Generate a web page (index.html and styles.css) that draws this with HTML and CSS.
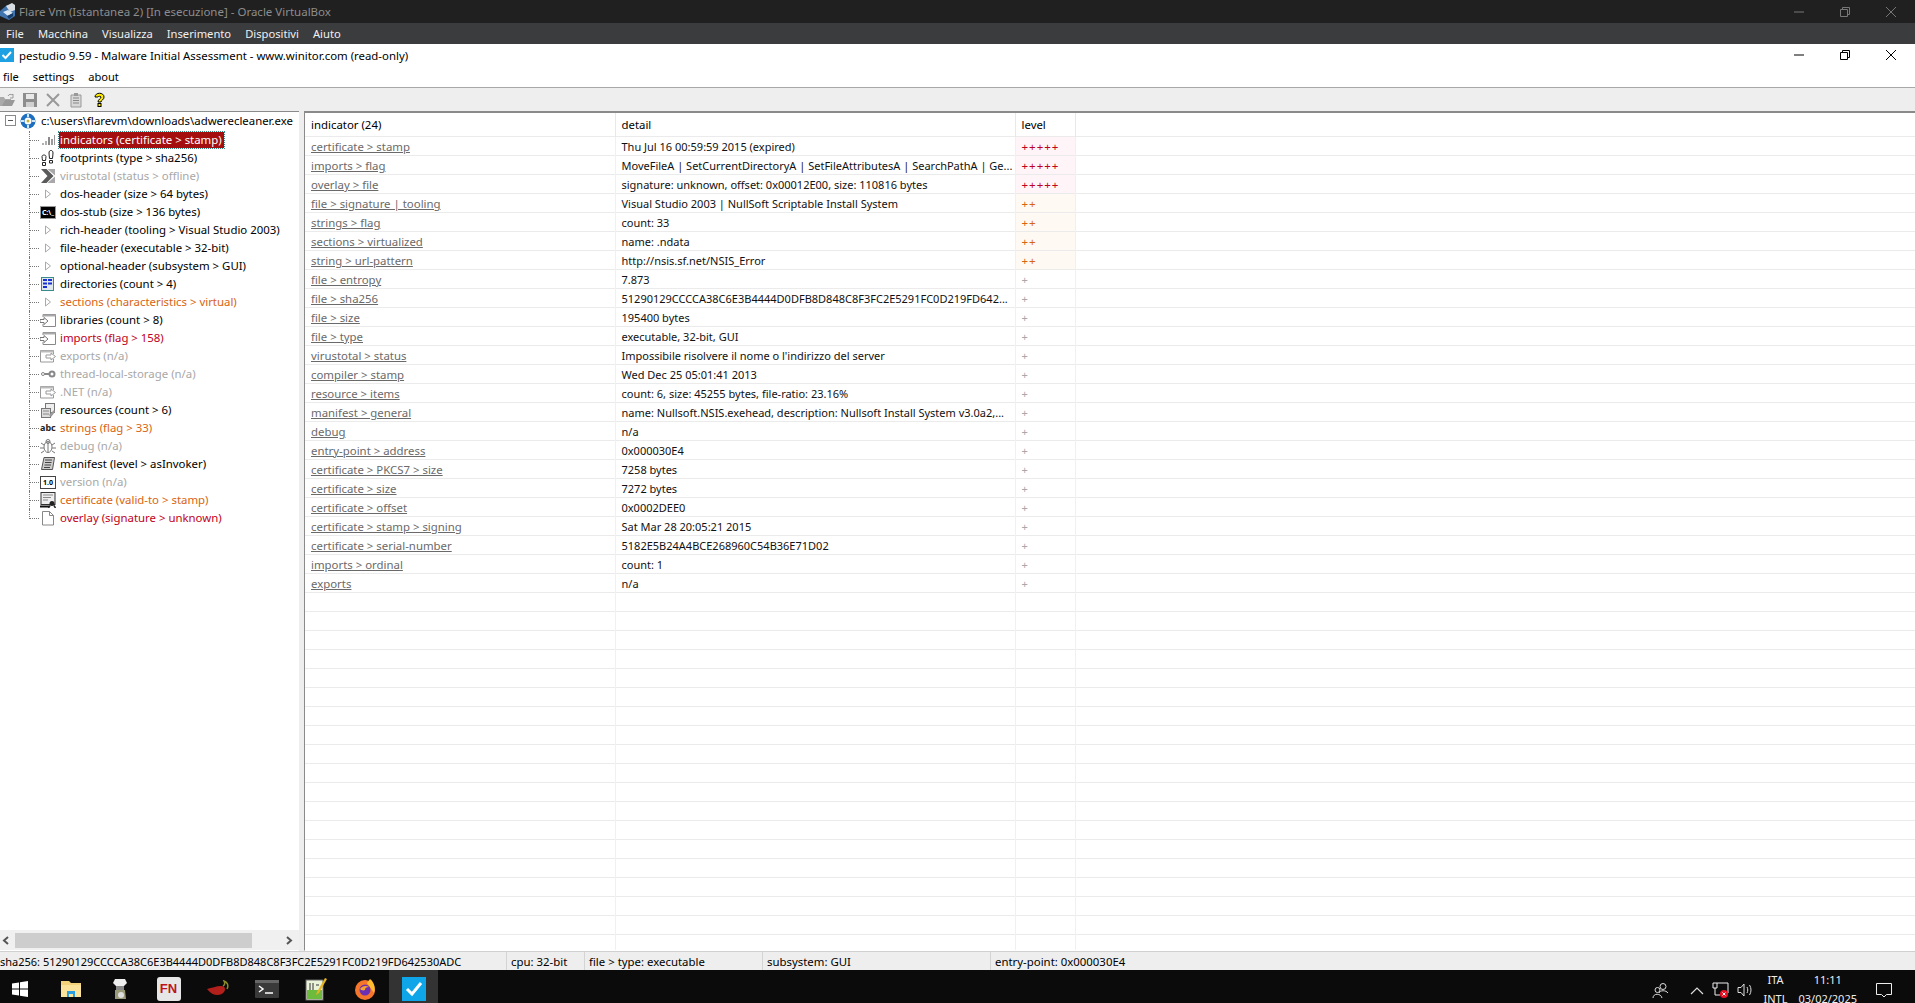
FILE: index.html
```html
<!DOCTYPE html>
<html>
<head>
    <meta charset="utf-8" />
    <title>pestudio 9.59 - Malware Initial Assessment</title>
    <link rel="stylesheet" href="styles.css">
</head>
<body>
    <svg class="defs" width="0" height="0">
        <symbol id="i_bars" viewBox="0 0 16 16"><path d="M2 13h2v-2H2zM5 13h2V9H5z" fill="#b0b0b0"/><path d="M8 13h2V5H8z" fill="#8a8a8a"/><path d="M11 13h2V7h-2zM14 13h1V3h-1z" fill="#9a9a9a"/></symbol>
        <symbol id="i_foot" viewBox="0 0 16 16"><g fill="none" stroke="#222"><path d="M2 6.500c0-2 4-2 4 0 0 1.500-.5 3-.5 4h-3c0-1-.5-2.500-.5-4zM2.500 12.500h3v3h-3z"/><path d="M9 3c0-3.500 4-3.500 4 0 0 2-.5 4-.5 5.500h-3C9.500 7 9 5 9 3zM9.500 10.500h3v2.500h-3z"/></g></symbol>
        <symbol id="i_vt" viewBox="0 0 16 16"><path d="M1 1h5.500l7 7-7 7H1l6.500-7z" fill="#5a5a5a"/><path d="M7.500 1H15v6.500zM7.500 15H15V8.500z" fill="#a8a8a8"/></symbol>
        <symbol id="i_tri" viewBox="0 0 16 16"><path d="M5.500 4v8l5-4z" fill="#fff" stroke="#aaa"/></symbol>
        <symbol id="i_dir" viewBox="0 0 16 16"><rect x="1.500" y="1.500" width="12" height="13" fill="#dfe8ee" stroke="#3b8a8a"/><path d="M3 3h4v2H3zM8 3h4v2H8zM3 6.500h4v2H3zM8 6.500h4v2H8zM3 10h4v2H3z" fill="#1a2fd0"/></symbol>
        <symbol id="i_lib" viewBox="0 0 16 16"><path d="M3 5V2.500h12.500v12H3V12" fill="#fff" stroke="#888"/><path d="M3 3.500h12.500" stroke="#aaa" stroke-width="2"/><path d="M0 7.500h4V5.500l4 3.500-4 3.500V10.500H0z" fill="#fff" stroke="#777"/></symbol>
        <symbol id="i_exp" viewBox="0 0 16 16"><path d="M.5 14V2.500h13V6M.5 14h13v-3" fill="#fff" stroke="#999"/><path d="M.5 3.500h13" stroke="#bbb" stroke-width="2"/><path d="M6 7h5V5l4.500 3.500L11 12v-2H6z" fill="#fff" stroke="#999"/></symbol>
        <symbol id="i_key" viewBox="0 0 16 16"><circle cx="12" cy="8" r="2.500" fill="none" stroke="#888" stroke-width="2"/><path d="M4 8h5" stroke="#888" stroke-width="2"/><circle cx="3" cy="8" r="1.500" fill="#fff" stroke="#888"/></symbol>
        <symbol id="i_res" viewBox="0 0 16 16"><rect x="5.500" y="1.500" width="9" height="9" fill="#eee" stroke="#777"/><rect x="1.500" y="6.500" width="9" height="9" fill="#ddd" stroke="#777"/><path d="M3 9h6M3 12h6" stroke="#888"/><path d="M9 13l5-5 1 2-4 5z" fill="#999"/></symbol>
        <symbol id="i_bug" viewBox="0 0 16 16"><g fill="none" stroke="#777"><ellipse cx="8" cy="9" rx="4" ry="5.500"/><circle cx="8" cy="3.500" r="2"/><path d="M8 4v10M1 5l3 2M15 5l-3 2M0 10h4M16 10h-4M1 15l3-2M15 15l-3-2"/></g></symbol>
        <symbol id="i_man" viewBox="0 0 16 16"><path d="M4 1.500h10.500l-2 12H1.500z" fill="#ccc" stroke="#555"/><path d="M5 4h7M5 6.500h6.500M4.500 9h6.500M4 11.500h6" stroke="#444"/></symbol>
        <symbol id="i_cert" viewBox="0 0 16 16"><rect x="1" y="0.500" width="14" height="12" fill="#eee" stroke="#333"/><path d="M3 3h10M3 5.500h8M3 8h5" stroke="#888"/><path d="M0 14.500h9" stroke="#111" stroke-width="2"/><circle cx="12" cy="11.500" r="2.500" fill="#222"/><path d="M10 13.500l-1.500 2.500M14 13.500l1.500 2.500" stroke="#222" stroke-width="1.500"/></symbol>
        <symbol id="i_page" viewBox="0 0 16 16"><path d="M2.500 1.500h7l4 4v9.500h-11z" fill="#fff" stroke="#888"/><path d="M9.500 1.500v4h4" fill="none" stroke="#888"/></symbol>
    </svg>

    <div id="vm_title">
        <svg class="vm_logo" width="15" height="18" viewBox="0 0 15 18"><path d="M0 8l7-6 8 3v8l-6 4-9-4z" fill="#3f74ae"/><path d="M6 3l6-3 3 2v5l-5 2z" fill="#d8dde2"/><path d="M3 9l5-2 5 3-5 3z" fill="#dce9f4"/><path d="M7 13l6-3v3l-4 3z" fill="#173c68"/></svg>
        <span>Flare Vm (Istantanea 2) [In esecuzione] - Oracle VirtualBox</span>
        <div class="caption caption_dim">
            <svg width="12" height="12" viewBox="0 0 12 12"><path d="M1 6h10" stroke="currentColor"/></svg>
            <svg width="12" height="12" viewBox="0 0 12 12"><path d="M1.500 3.500h7v7h-7zM3.500 3.500v-2h7v7h-2" fill="none" stroke="currentColor"/></svg>
            <svg width="12" height="12" viewBox="0 0 12 12"><path d="M1 1l10 10M11 1L1 11" stroke="currentColor"/></svg>
        </div>
    </div>
    <div id="vm_menu">
        <span>File</span><span>Macchina</span><span>Visualizza</span><span>Inserimento</span><span>Dispositivi</span><span>Aiuto</span>
    </div>

    <div id="app_title">
        <svg class="app_logo" width="14" height="14" viewBox="0 0 14 14"><rect width="14" height="14" fill="#1da1e2"/><path d="M2.500 7l3 3 5.500-6" fill="none" stroke="#fff" stroke-width="2"/></svg>
        <span>pestudio 9.59 - Malware Initial Assessment - www.winitor.com (read-only)</span>
        <div class="caption">
            <svg width="12" height="12" viewBox="0 0 12 12"><path d="M1 6h10" stroke="currentColor"/></svg>
            <svg width="12" height="12" viewBox="0 0 12 12"><path d="M1.500 3.500h7v7h-7zM3.500 3.500v-2h7v7h-2" fill="none" stroke="currentColor"/></svg>
            <svg width="12" height="12" viewBox="0 0 12 12"><path d="M1 1l10 10M11 1L1 11" stroke="currentColor"/></svg>
        </div>
    </div>
    <div id="app_menu">
        <span>file</span><span>settings</span><span>about</span>
    </div>
    <div id="toolbar">
        <svg width="16" height="16" viewBox="0 0 16 16"><path d="M0 5h5l1 2h6v7H0z" fill="#aaa"/><path d="M3 14l3-6h10l-3 6z" fill="#999"/><path d="M9 4c1-2 3-2 4-1l1-1v4h-3" fill="none" stroke="#999"/></svg>
        <svg width="16" height="16" viewBox="0 0 16 16"><path d="M1 1h14v14H1z" fill="#8d8d8d"/><path d="M4 2h8v5H4z" fill="#e8e8e8"/><path d="M4 10h8v5H4z" fill="#d0d0d0"/></svg>
        <svg width="16" height="16" viewBox="0 0 16 16"><path d="M2 2l12 12M14 2L2 14" stroke="#999" stroke-width="2"/></svg>
        <svg width="16" height="16" viewBox="0 0 16 16"><path d="M3 3h10v12H3z" fill="#d8d8d8" stroke="#999"/><path d="M5 6h6M5 8.500h6M5 11h6" stroke="#888"/><path d="M6 1h4v3H6z" fill="#999"/></svg>
        <svg width="16" height="16" viewBox="0 0 16 16"><path d="M4 5c0-5 9-5 9 0 0 3-3 3-3 5H7c0-3 3-3 3-5 0-1-3-1-3 0z" fill="#ffec00" stroke="#000"/><rect x="7" y="11.500" width="3" height="3" fill="#ffec00" stroke="#000"/></svg>
    </div>

    <div id="main">
        <div id="tree_pane">
            <div id="tree">
                <div class="tree_root">
                    <span class="minus"></span>
                    <svg class="globe" width="16" height="16" viewBox="0 0 16 16"><circle cx="8" cy="8" r="7.500" fill="#1f6fc0"/><circle cx="8" cy="8" r="3.500" fill="#fff"/><path d="M8 1v3M8 12v3M1 8h3M12 8h3" stroke="#cfe6f7" stroke-width="2"/><circle cx="8" cy="8" r="1.500" fill="#c5b23c"/></svg>
                    <span>c:\users\flarevm\downloads\adwerecleaner.exe</span>
                </div>
                <div class="tree_row"><span class="stub"></span><svg class="ico"><use href="#i_bars"/></svg><span class="label label_sel">indicators (certificate &gt; stamp)</span></div>
                <div class="tree_row"><span class="stub"></span><svg class="ico"><use href="#i_foot"/></svg><span class="label">footprints (type &gt; sha256)</span></div>
                <div class="tree_row"><span class="stub"></span><svg class="ico"><use href="#i_vt"/></svg><span class="label off">virustotal (status &gt; offline)</span></div>
                <div class="tree_row"><span class="stub"></span><svg class="ico"><use href="#i_tri"/></svg><span class="label">dos-header (size &gt; 64 bytes)</span></div>
                <div class="tree_row"><span class="stub"></span><span class="ico ico_dos">C:\_</span><span class="label">dos-stub (size &gt; 136 bytes)</span></div>
                <div class="tree_row"><span class="stub"></span><svg class="ico"><use href="#i_tri"/></svg><span class="label">rich-header (tooling &gt; Visual Studio 2003)</span></div>
                <div class="tree_row"><span class="stub"></span><svg class="ico"><use href="#i_tri"/></svg><span class="label">file-header (executable &gt; 32-bit)</span></div>
                <div class="tree_row"><span class="stub"></span><svg class="ico"><use href="#i_tri"/></svg><span class="label">optional-header (subsystem &gt; GUI)</span></div>
                <div class="tree_row"><span class="stub"></span><svg class="ico"><use href="#i_dir"/></svg><span class="label">directories (count &gt; 4)</span></div>
                <div class="tree_row"><span class="stub"></span><svg class="ico"><use href="#i_tri"/></svg><span class="label warn">sections (characteristics &gt; virtual)</span></div>
                <div class="tree_row"><span class="stub"></span><svg class="ico"><use href="#i_lib"/></svg><span class="label">libraries (count &gt; 8)</span></div>
                <div class="tree_row"><span class="stub"></span><svg class="ico"><use href="#i_lib"/></svg><span class="label bad">imports (flag &gt; 158)</span></div>
                <div class="tree_row"><span class="stub"></span><svg class="ico"><use href="#i_exp"/></svg><span class="label off">exports (n/a)</span></div>
                <div class="tree_row"><span class="stub"></span><svg class="ico"><use href="#i_key"/></svg><span class="label off">thread-local-storage (n/a)</span></div>
                <div class="tree_row"><span class="stub"></span><svg class="ico"><use href="#i_exp"/></svg><span class="label off">.NET (n/a)</span></div>
                <div class="tree_row"><span class="stub"></span><svg class="ico"><use href="#i_res"/></svg><span class="label">resources (count &gt; 6)</span></div>
                <div class="tree_row"><span class="stub"></span><span class="ico ico_abc">abc</span><span class="label warn">strings (flag &gt; 33)</span></div>
                <div class="tree_row"><span class="stub"></span><svg class="ico"><use href="#i_bug"/></svg><span class="label off">debug (n/a)</span></div>
                <div class="tree_row"><span class="stub"></span><svg class="ico"><use href="#i_man"/></svg><span class="label">manifest (level &gt; asInvoker)</span></div>
                <div class="tree_row"><span class="stub"></span><span class="ico ico_ver">1.0</span><span class="label off">version (n/a)</span></div>
                <div class="tree_row"><span class="stub"></span><svg class="ico"><use href="#i_cert"/></svg><span class="label warn">certificate (valid-to &gt; stamp)</span></div>
                <div class="tree_row tree_last"><span class="stub"></span><svg class="ico"><use href="#i_page"/></svg><span class="label bad">overlay (signature &gt; unknown)</span></div>
            </div>
            <div class="hscroll">
                <svg width="15" height="17" viewBox="0 0 15 17"><path d="M8 5L4 8.500l4 3.500" fill="none" stroke="#555" stroke-width="2"/></svg>
                <div class="hscroll_track"><div class="hscroll_thumb"></div></div>
                <svg width="17" height="17" viewBox="0 0 17 17"><path d="M5 5l4 3.500L5 12" fill="none" stroke="#555" stroke-width="2"/></svg>
            </div>
        </div>

        <div id="grid_pane">
            <table id="grid">
                <colgroup><col class="c1"><col class="c2"><col class="c3"><col></colgroup>
                <thead><tr><th>indicator (24)</th><th>detail</th><th>level</th><th class="rest"></th></tr></thead>
                <tbody>
                    <tr><td class="link">certificate &gt; stamp</td><td>Thu Jul 16 00:59:59 2015 (expired)</td><td class="lv5">+++++</td><td></td></tr>
                    <tr><td class="link">imports &gt; flag</td><td>MoveFileA | SetCurrentDirectoryA | SetFileAttributesA | SearchPathA | Ge...</td><td class="lv5">+++++</td><td></td></tr>
                    <tr><td class="link">overlay &gt; file</td><td>signature: unknown, offset: 0x00012E00, size: 110816 bytes</td><td class="lv5">+++++</td><td></td></tr>
                    <tr><td class="link">file &gt; signature | tooling</td><td>Visual Studio 2003 | NullSoft Scriptable Install System</td><td class="lv2">++</td><td></td></tr>
                    <tr><td class="link">strings &gt; flag</td><td>count: 33</td><td class="lv2">++</td><td></td></tr>
                    <tr><td class="link">sections &gt; virtualized</td><td>name: .ndata</td><td class="lv2">++</td><td></td></tr>
                    <tr><td class="link">string &gt; url-pattern</td><td>http://nsis.sf.net/NSIS_Error</td><td class="lv2">++</td><td></td></tr>
                    <tr><td class="link">file &gt; entropy</td><td>7.873</td><td class="lv1">+</td><td></td></tr>
                    <tr><td class="link">file &gt; sha256</td><td>51290129CCCCA38C6E3B4444D0DFB8D848C8F3FC2E5291FC0D219FD642...</td><td class="lv1">+</td><td></td></tr>
                    <tr><td class="link">file &gt; size</td><td>195400 bytes</td><td class="lv1">+</td><td></td></tr>
                    <tr><td class="link">file &gt; type</td><td>executable, 32-bit, GUI</td><td class="lv1">+</td><td></td></tr>
                    <tr><td class="link">virustotal &gt; status</td><td>Impossibile risolvere il nome o l'indirizzo del server</td><td class="lv1">+</td><td></td></tr>
                    <tr><td class="link">compiler &gt; stamp</td><td>Wed Dec 25 05:01:41 2013</td><td class="lv1">+</td><td></td></tr>
                    <tr><td class="link">resource &gt; items</td><td>count: 6, size: 45255 bytes, file-ratio: 23.16%</td><td class="lv1">+</td><td></td></tr>
                    <tr><td class="link">manifest &gt; general</td><td>name: Nullsoft.NSIS.exehead, description: Nullsoft Install System v3.0a2,...</td><td class="lv1">+</td><td></td></tr>
                    <tr><td class="link">debug</td><td>n/a</td><td class="lv1">+</td><td></td></tr>
                    <tr><td class="link">entry-point &gt; address</td><td>0x000030E4</td><td class="lv1">+</td><td></td></tr>
                    <tr><td class="link">certificate &gt; PKCS7 &gt; size</td><td>7258 bytes</td><td class="lv1">+</td><td></td></tr>
                    <tr><td class="link">certificate &gt; size</td><td>7272 bytes</td><td class="lv1">+</td><td></td></tr>
                    <tr><td class="link">certificate &gt; offset</td><td>0x0002DEE0</td><td class="lv1">+</td><td></td></tr>
                    <tr><td class="link">certificate &gt; stamp &gt; signing</td><td>Sat Mar 28 20:05:21 2015</td><td class="lv1">+</td><td></td></tr>
                    <tr><td class="link">certificate &gt; serial-number</td><td>5182E5B24A4BCE268960C54B36E71D02</td><td class="lv1">+</td><td></td></tr>
                    <tr><td class="link">imports &gt; ordinal</td><td>count: 1</td><td class="lv1">+</td><td></td></tr>
                    <tr><td class="link">exports</td><td>n/a</td><td class="lv1">+</td><td></td></tr>
                    <tr><td></td><td></td><td></td><td></td></tr>
                    <tr><td></td><td></td><td></td><td></td></tr>
                    <tr><td></td><td></td><td></td><td></td></tr>
                    <tr><td></td><td></td><td></td><td></td></tr>
                    <tr><td></td><td></td><td></td><td></td></tr>
                    <tr><td></td><td></td><td></td><td></td></tr>
                    <tr><td></td><td></td><td></td><td></td></tr>
                    <tr><td></td><td></td><td></td><td></td></tr>
                    <tr><td></td><td></td><td></td><td></td></tr>
                    <tr><td></td><td></td><td></td><td></td></tr>
                    <tr><td></td><td></td><td></td><td></td></tr>
                    <tr><td></td><td></td><td></td><td></td></tr>
                    <tr><td></td><td></td><td></td><td></td></tr>
                    <tr><td></td><td></td><td></td><td></td></tr>
                    <tr><td></td><td></td><td></td><td></td></tr>
                    <tr><td></td><td></td><td></td><td></td></tr>
                    <tr><td></td><td></td><td></td><td></td></tr>
                    <tr><td></td><td></td><td></td><td></td></tr>
                    <tr><td></td><td></td><td></td><td></td></tr>
                </tbody>
            </table>
        </div>
    </div>

    <div id="status">
        <span class="st st_sha">sha256: 51290129CCCCA38C6E3B4444D0DFB8D848C8F3FC2E5291FC0D219FD642530ADC</span>
        <span class="st st_cpu">cpu: 32-bit</span>
        <span class="st st_type">file &gt; type: executable</span>
        <span class="st st_sub">subsystem: GUI</span>
        <span class="st">entry-point: 0x000030E4</span>
    </div>

    <div id="taskbar">
        <div class="task task_start"><svg width="16" height="16" viewBox="0 0 16 16"><path d="M0 2.500l7-1v6H0zM8 1.300l8-1.200v7.400H8zM0 8.500h7v6l-7-1zM8 8.500h8v7.400l-8-1.200z" fill="#fff"/></svg></div>
        <div class="task"><svg width="22" height="20" viewBox="0 0 22 20"><path d="M1 2h8l2 2h10v14H1z" fill="#f4d27a"/><path d="M1 6h20v12H1z" fill="#fbe39b"/><path d="M7 12h8v6h-2v-3H9v3H7z" fill="#2c9fe0"/></svg></div>
        <div class="task"><svg width="16" height="24" viewBox="0 0 16 24"><path d="M3 2h10l2 4-3 3H4L1 6z" fill="#eee"/><path d="M4 9h8v4H4z" fill="#888"/><path d="M3 13h10l1 9H3z" fill="#9a9a78"/><circle cx="9" cy="18" r="3" fill="#ddd"/></svg></div>
        <div class="task"><span class="fn">FN</span></div>
        <div class="task"><svg width="24" height="18" viewBox="0 0 24 18"><path d="M1 9c5-1 9-3 14-3 4 0 5 3 3 6-3 4-11 5-17-3z" fill="#b3201b"/><path d="M17 6c2-1 2-3 1-5 3 1 5 4 3 8" fill="none" stroke="#8a8a2a" stroke-width="1.500"/></svg></div>
        <div class="task"><svg width="24" height="18" viewBox="0 0 24 18"><rect width="24" height="18" rx="1" fill="#3a3a3a"/><rect width="24" height="3" fill="#666"/><path d="M4 6l4 3-4 3" fill="none" stroke="#fff" stroke-width="1.500"/><path d="M10 13h8" stroke="#fff" stroke-width="1.500"/></svg></div>
        <div class="task"><svg width="22" height="24" viewBox="0 0 22 24"><rect x="1" y="3" width="17" height="20" fill="#e9f3d8" stroke="#666"/><path d="M2 13h15v9H2z" fill="#6cbb3c"/><path d="M5 6v7M8 6v7M11 8h3" stroke="#333"/><path d="M12 15L20 1l2 1-8 14-3 2z" fill="#e6b422"/></svg></div>
        <div class="task"><svg width="24" height="24" viewBox="0 0 24 24"><circle cx="12" cy="13" r="10" fill="#f5762a"/><path d="M17 2c4 3 6 9 4 14L14 6z" fill="#ffbd2e"/><circle cx="12" cy="13" r="5.500" fill="#6b2fb3"/><path d="M7 12c2-3 6-4 9-2-3 0-4 1-4 3-2 1-4 0-5-1z" fill="#f5a32a"/></svg></div>
        <div class="task task_on"><svg width="24" height="24" viewBox="0 0 24 24"><rect width="24" height="24" fill="#0ea5e9"/><path d="M5 12l5 5 9-11" fill="none" stroke="#fff" stroke-width="3"/></svg></div>
        <div class="tray">
            <svg width="17" height="17" viewBox="0 0 17 17"><g fill="none" stroke="#ddd"><circle cx="11" cy="4.500" r="3"/><path d="M7 11c1-3 7-3 9 0"/><circle cx="5.500" cy="8" r="2.500"/><path d="M1 16c0-5 8-5 9 0"/></g></svg>
            <svg class="tray_up" width="14" height="9" viewBox="0 0 14 9"><path d="M1 8l6-6 6 6" fill="none" stroke="#ddd" stroke-width="1.200"/></svg>
            <svg class="tray_net" width="17" height="16" viewBox="0 0 17 16"><g fill="none" stroke="#eee"><path d="M1 1h15v10h-6M1 1v5h4V1M3 6v7h5"/></g><circle cx="12" cy="12" r="4" fill="#e81123"/><path d="M10.500 10.500l3 3M13.500 10.500l-3 3" stroke="#fff"/></svg>
            <svg class="tray_vol" width="17" height="16" viewBox="0 0 17 16"><g fill="none" stroke="#ddd"><path d="M1 5.500h3L7 2v12l-3-3.500H1z"/><path d="M10 5c1 2 1 4 0 6M12.500 3c2 3 2 7 0 10"/></g></svg>
            <div class="tray_lang"><span>ITA</span><span>INTL</span></div>
            <div class="tray_clock"><span>11:11</span><span>03/02/2025</span></div>
            <svg class="tray_note" width="16" height="16" viewBox="0 0 16 16"><path d="M.5 1.500h15v11h-5L8 15l-2.500-2.500h-5z" fill="none" stroke="#eee"/></svg>
        </div>
    </div>
</body>
</html>
```

FILE: styles.css
```css
* {
    box-sizing: border-box;
}
html, body {
    height: 100%;
    margin: 0;
    overflow: hidden;
}
body {
    display: flex;
    flex-direction: column;
    font-family: "Noto Sans", "Liberation Sans", sans-serif;
    font-size: 11.4px;
    color: #000000;
    background-color: #ffffff;
}
.defs {
    display: none;
}
.caption {
    margin-left: auto;
    display: flex;
    gap: 34px;
    padding-right: 18px;
    color: #000000;
}
.caption_dim {
    color: #777777;
}
#vm_title {
    flex: none;
    height: 23px;
    display: flex;
    align-items: center;
    gap: 4px;
    background-color: #202020;
    color: #8d8d8d;
    font-size: 11.5px;
}
#vm_menu {
    flex: none;
    height: 21px;
    display: flex;
    align-items: center;
    gap: 14px;
    padding-left: 6px;
    background-color: #3b3c3e;
    color: #f0f0f0;
    font-size: 11.2px;
}
#app_title {
    flex: none;
    height: 22px;
    display: flex;
    align-items: center;
    gap: 5px;
}
#app_menu {
    flex: none;
    height: 21px;
    display: flex;
    align-items: center;
    gap: 14px;
    padding-left: 3px;
    font-size: 11.1px;
}
#toolbar {
    flex: none;
    height: 24px;
    display: flex;
    align-items: center;
    gap: 7px;
    margin-left: -1px;
    border-top: 1px solid #a8a8a8;
    background-color: #eeeeee;
}
#main {
    flex: 1;
    min-height: 0;
    display: flex;
    background-color: #eeeeee;
}
#tree_pane {
    flex: none;
    width: 299px;
    display: flex;
    flex-direction: column;
    background-color: #ffffff;
    border-top: 1px solid #8a8a8a;
}
#tree {
    flex: 1;
}
.tree_root {
    height: 17px;
    margin-bottom: 2px;
    display: flex;
    align-items: center;
    padding-left: 5px;
    white-space: nowrap;
}
.minus {
    width: 11px;
    height: 11px;
    margin-right: 4px;
    border: 1px solid #8a8a8a;
    background: linear-gradient(#555555, #555555) center / 5px 1px no-repeat;
}
.globe {
    margin-right: 5px;
}
.tree_row {
    height: 18px;
    display: flex;
    align-items: center;
    margin-left: 29px;
    white-space: nowrap;
}
.stub {
    align-self: stretch;
    width: 11px;
    border-left: 1px dotted #777777;
    background: linear-gradient(to right, #777777 50%, transparent 50%) 0 9px / 2px 1px repeat-x;
}
.tree_last .stub {
    height: 10px;
}
.ico {
    flex: none;
    width: 16px;
    height: 16px;
}
.ico_dos {
    background-color: #000000;
    border: 1px solid #999999;
    height: 13px;
    color: #ffffff;
    font-size: 7px;
    font-weight: bold;
    line-height: 11px;
    text-align: center;
}
.ico_abc {
    font-size: 9px;
    font-weight: bold;
    line-height: 16px;
    color: #222222;
}
.ico_ver {
    border: 1px solid #444444;
    height: 13px;
    font-size: 7px;
    font-weight: bold;
    line-height: 11px;
    text-align: center;
}
.label {
    margin-left: 3px;
    padding: 0 2px 0 1px;
    line-height: 16px;
}
.label_sel {
    background-color: #a50e0e;
    color: #ffffff;
    outline: 1px dotted #3a8a8a;
}
.off {
    color: #a8a8a8;
}
.warn {
    color: #d9640f;
}
.bad {
    color: #bf0020;
}
.hscroll {
    flex: none;
    height: 21px;
    display: flex;
    align-items: center;
    background-color: #f0f0f0;
    border-bottom: 1px solid #ffffff;
}
.hscroll_track {
    flex: 1;
    height: 15px;
}
.hscroll_thumb {
    width: 237px;
    height: 100%;
    background-color: #cdcdcd;
}
#grid_pane {
    flex: 1;
    min-width: 0;
    margin-left: 5px;
    overflow: hidden;
    background-color: #ffffff;
    border-top: 2px solid #8a8a8a;
    border-left: 1px solid #8a8a8a;
    border-bottom: 1px solid #ffffff;
}
#grid {
    width: 100%;
    table-layout: fixed;
    border-collapse: collapse;
}
.c1 {
    width: 310px;
}
.c2 {
    width: 400px;
}
.c3 {
    width: 60px;
}
#grid th {
    height: 23px;
    padding: 0 0 0 6px;
    font-weight: normal;
    text-align: left;
    border-right: 1px solid #e8e8e8;
}
#grid th.rest {
    border-right: none;
}
#grid td {
    height: 19px;
    padding: 2px 0 0 6px;
    line-height: 15px;
    font-size: 11px;
    white-space: nowrap;
    overflow: hidden;
    border-top: 1px solid #ebebeb;
    color: #111111;
}
#grid td:nth-child(-n+3) {
    border-right: 1px solid #f0f0f0;
}
#grid td.link {
    font-size: 11.4px;
    color: #6a6a6a;
    text-decoration: underline;
}
#grid td.lv5 {
    background-color: #fff5f8;
    color: #bf0020;
    font-size: 11.5px;
    letter-spacing: 1px;
}
#grid td.lv2 {
    background-color: #fff9f3;
    color: #d9640f;
    font-size: 11.5px;
    letter-spacing: 1px;
}
#grid td.lv1 {
    color: #a8a8a8;
}
#status {
    flex: none;
    height: 19px;
    display: flex;
    align-items: center;
    background-color: #eeeeee;
    border-top: 1px solid #d0d0d0;
    white-space: nowrap;
}
.st {
    height: 100%;
    line-height: 20px;
    padding-left: 4px;
    border-right: 1px solid #d4d4d4;
}
.st:last-child {
    border-right: none;
}
.st_sha {
    width: 507px;
    padding-left: 0;
    font-size: 11px;
}
.st_cpu {
    width: 78px;
}
.st_type {
    width: 178px;
}
.st_sub {
    width: 228px;
}
#taskbar {
    flex: none;
    height: 33px;
    overflow: hidden;
    display: flex;
    background-color: #0b0b0b;
    color: #eeeeee;
}
.task {
    flex: none;
    width: 49px;
    height: 33px;
    display: flex;
    align-items: center;
    justify-content: center;
    padding-top: 4px;
}
.task_start {
    width: 46px;
    justify-content: flex-start;
    padding-left: 12px;
}
.task_on {
    background-color: #333333;
}
.fn {
    width: 24px;
    height: 24px;
    border-radius: 3px;
    background-color: #e6e6e6;
    color: #c0141c;
    font-family: "Liberation Sans", sans-serif;
    font-size: 13px;
    font-weight: bold;
    line-height: 24px;
    text-align: center;
}
.tray {
    margin-left: auto;
    display: flex;
    align-items: center;
    gap: 8px;
    padding-right: 23px;
    font-size: 11px;
}
.tray svg {
    margin-top: 7px;
}
.tray_up {
    margin-left: 13px;
}
.tray_lang, .tray_clock {
    align-self: flex-start;
    display: flex;
    flex-direction: column;
    align-items: center;
    line-height: 19px;
}
.tray_lang {
    margin-left: 1px;
}
.tray_clock {
    margin-left: 3px;
}
.tray_note {
    margin-left: 11px;
}
```
